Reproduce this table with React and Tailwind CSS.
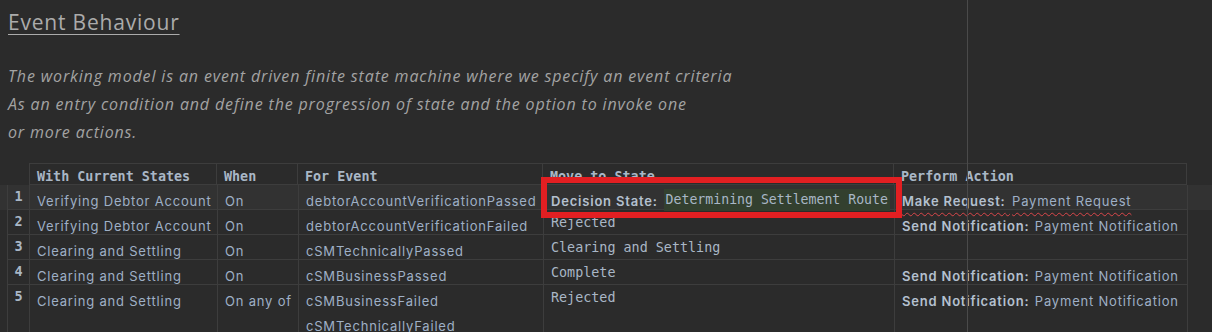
import React from 'react';

const sans = { fontFamily: 'Inter, "Noto Sans", sans-serif' };
const mono = { fontFamily: '"DejaVu Sans Mono", "Liberation Mono", monospace' };
const prose = { fontFamily: '"Open Sans", "Noto Sans", sans-serif' };

const cols = ['w-[188px]', 'w-[81px]', 'w-[245px]', 'w-[351px]', 'w-[293px]'];

const rows = [
  { n: 1, state: 'Verifying Debtor Account', when: 'On', events: ['debtorAccountVerificationPassed'], move: 'decision', action: 'request' },
  { n: 2, state: 'Verifying Debtor Account', when: 'On', events: ['debtorAccountVerificationFailed'], move: 'Rejected', action: 'notify' },
  { n: 3, state: 'Clearing and Settling', when: 'On', events: ['cSMTechnicallyPassed'], move: 'Clearing and Settling', action: null },
  { n: 4, state: 'Clearing and Settling', when: 'On', events: ['cSMBusinessPassed'], move: 'Complete', action: 'notify' },
  { n: 5, state: 'Clearing and Settling', when: 'On any of', events: ['cSMBusinessFailed', 'cSMTechnicallyFailed'], move: 'Rejected', action: 'notify', tall: true },
];

const Cell = ({ w, children, className = '' }) => (
  <div className={`${w} shrink-0 border-r border-b border-[#3d3d3d] pl-[7px] ${className}`}>{children}</div>
);

const Action = ({ kind }) => {
  if (kind === 'request') {
    return (
      <span className="underline decoration-wavy decoration-[#d9464a] decoration-1 underline-offset-[6px]">
        <span className="font-semibold text-[#b4c0cf]">Make Request:</span>{' '}
        <span className="ml-[2px]">Payment Request</span>
      </span>
    );
  }
  if (kind === 'notify') {
    return (
      <span>
        <span className="font-semibold text-[#b4c0cf]">Send Notification:</span>{' '}
        <span className="ml-[1px]">Payment Notification</span>
      </span>
    );
  }
  return null;
};

const Row = ({ row }) => (
  <div className={`flex pl-[7px] ${row.n === 1 ? 'bg-[#323232]' : ''} ${row.tall ? 'h-[50px]' : 'h-[25px]'}`}>
    <div className="w-[23px] shrink-0 border-l border-r border-b border-[#3d3d3d] text-center font-bold text-[13.5px] leading-[22px] text-[#a9b7c6]" style={mono}>
      {row.n}
    </div>
    <Cell w={cols[0]} className="pt-[4px] text-[13px] tracking-[0.8px] leading-[25px] text-[#9fb0c6]">
      <span style={sans}>{row.state}</span>
    </Cell>
    <Cell w={cols[1]} className="pt-[4px] text-[13px] tracking-[0.8px] leading-[25px] text-[#9fb0c6]">
      <span style={sans}>{row.when}</span>
    </Cell>
    <Cell w={cols[2]} className="pt-[4px] text-[13px] tracking-[0.8px] leading-[25px] text-[#9fb0c6]">
      {row.events.map((e) => (
        <div key={e} style={sans}>{e}</div>
      ))}
    </Cell>
    {row.move === 'decision' ? (
      <Cell w={cols[3]} className="relative pt-[4px] text-[13px] leading-[25px] text-[#a9b7c6]">
        <div className="flex items-center h-[25px]">
          <span className="font-semibold tracking-[0.8px] text-[#b4c0cf]" style={sans}>Decision State:</span>
          <span className="ml-[6px] bg-[#33402f] h-[22px] leading-[22px] px-[2px] -mt-[4px] text-[13.2px]" style={mono}>Determining Settlement Route</span>
        </div>
        <div className="absolute -left-[3px] -top-[8px] w-[361px] h-[41px] border-[6px] border-[#e21f22]" />
      </Cell>
    ) : (
      <Cell w={cols[3]} className="text-[13.4px] leading-[25px] text-[#a9b7c6]">
        <span style={mono}>{row.move}</span>
      </Cell>
    )}
    <Cell w={cols[4]} className="pt-[4px] text-[13px] tracking-[0.8px] leading-[25px] text-[#9fb0c6]">
      <span style={sans}>
        <Action kind={row.action} />
      </span>
    </Cell>
  </div>
);

export default function App() {
  return (
    <div className="relative w-[1212px] h-[332px] overflow-hidden bg-[#2b2b2b]">
      <div className="pt-2">
        <h1 className="pl-2 text-[21px] tracking-[0.8px] leading-[28px] text-[#ababab] underline underline-offset-[4px] decoration-1" style={prose}>
          Event Behaviour
        </h1>
        <div className="pl-2 mt-[26px] text-[16px] tracking-[0.85px] leading-[28px] italic text-[#a3a3a3]" style={prose}>
          <p>The working model is an event driven finite state machine where we specify an event criteria</p>
          <p>As an entry condition and define the progression of state and the option to invoke one</p>
          <p>or more actions.</p>
        </div>
        <div className="mt-[17px]">
          <div className="flex pl-[29px] h-[22px]">
            {['With Current States', 'When', 'For Event', 'Move to State', 'Perform Action'].map((h, i) => (
              <div
                key={h}
                className={`${cols[i]} shrink-0 border-t border-r border-b border-[#3d3d3d] ${i === 0 ? 'border-l' : ''} pl-[7px] pt-[4px] text-[13.4px] leading-[18px] font-bold text-[#a9b7c6]`}
                style={mono}
              >
                {h}
              </div>
            ))}
          </div>
          {rows.map((r) => (
            <Row key={r.n} row={r} />
          ))}
        </div>
      </div>
      <div className="absolute top-0 bottom-0 left-[967px] w-px bg-[#4a4a4a]" />
    </div>
  );
}
